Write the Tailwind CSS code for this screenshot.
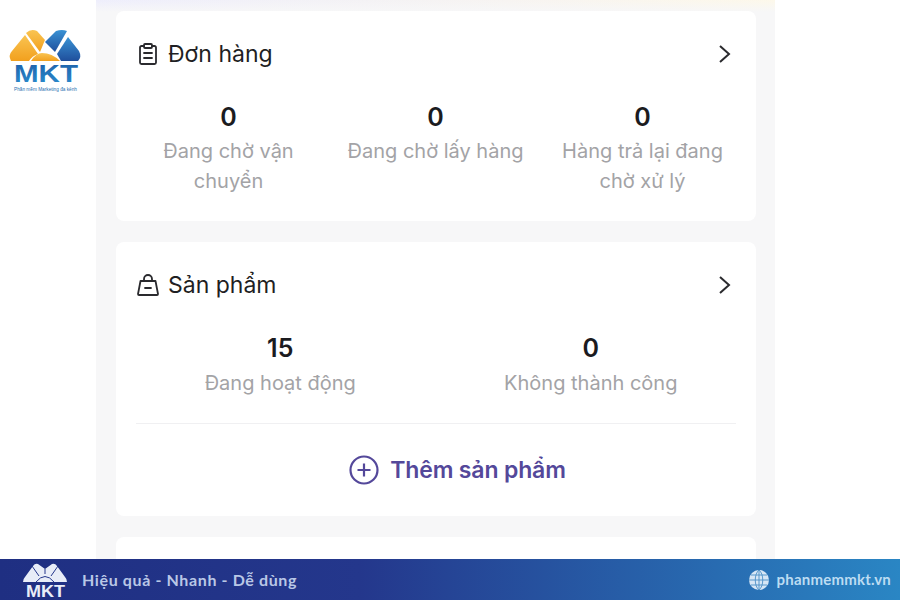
<!DOCTYPE html>
<html lang="en">
<head>
    <meta charset="UTF-8">
    <title>Đơn hàng - Sản phẩm</title>
    <script src="https://cdn.jsdelivr.net/npm/@tailwindcss/browser@4"></script>
</head>
<body class="bg-white font-['Inter',sans-serif] w-[900px] h-[600px] overflow-hidden flex flex-col">

    <!-- Screenshot area -->
    <div class="h-[559px] flex overflow-hidden">
        <!-- Logo column -->
        <div class="w-[96px] shrink-0 pl-[10px] pt-[29px]">
            <svg width="72" height="62" viewBox="0 0 72 62" class="overflow-visible">
                <defs>
                    <linearGradient id="logoOrange" x1="0" y1="0" x2="0" y2="1">
                        <stop offset="0" stop-color="#f9c452"/>
                        <stop offset="1" stop-color="#f2a01e"/>
                    </linearGradient>
                    <linearGradient id="logoBlue" x1="0" y1="0" x2="0" y2="1">
                        <stop offset="0" stop-color="#3a92d4"/>
                        <stop offset="1" stop-color="#1f4f9c"/>
                    </linearGradient>
                    <linearGradient id="logoText" x1="0" y1="0" x2="0" y2="1">
                        <stop offset="0" stop-color="#1f5fa8"/>
                        <stop offset="1" stop-color="#2a8fd0"/>
                    </linearGradient>
                </defs>
                <path d="M1 32 Q-2 26 2 22 L15 6 L28 25 Q22 27 19 32Z" fill="url(#logoOrange)"/>
                <path d="M16 4 Q21 -1 27 2 L35 11 L30 23Z" fill="url(#logoOrange)"/>
                <path d="M21 32 Q26 24 32 24 Q42 24 50 32Z" fill="url(#logoOrange)"/>
                <path d="M35 13 L46 2 Q52 0 57 2 L45 23Z" fill="url(#logoBlue)"/>
                <path d="M47 25 L58 8 L69 22 Q72 28 68 32 L51 32Z" fill="url(#logoBlue)"/>
                <text x="4" y="53" font-family="Liberation Sans" font-weight="700" font-size="23" textLength="64" lengthAdjust="spacingAndGlyphs" fill="url(#logoText)">MKT</text>
                <text x="4" y="61.500" font-family="Liberation Sans" font-size="4.500" textLength="63" lengthAdjust="spacingAndGlyphs" fill="#2a6fb0">Phần mềm Marketing đa kênh</text>
            </svg>
        </div>

        <!-- Phone column -->
        <div class="w-[679px] shrink-0 bg-[linear-gradient(180deg,transparent_0,#f7f7f8_12px),linear-gradient(90deg,#eeeefc,#fdf8ea)] pl-[20px] pr-[19px] pt-[11px] flex flex-col gap-[21px]">
            <!-- Orders card -->
            <section class="h-[210px] shrink-0 bg-white rounded-[8px] px-[20px] pt-[28px]">
                <div class="flex items-center justify-between h-[30px]">
                    <div class="flex items-center gap-[8px]">
                        <svg class="w-[24px] h-[24px] text-[#2a2a2e]" viewBox="0 0 24 24" fill="none" stroke="currentColor" stroke-width="1.8" stroke-linejoin="round" stroke-linecap="round">
                            <path d="M8 4H5.5A1.5 1.5 0 0 0 4 5.500V20.500A1.500 1.500 0 0 0 5.500 22H18.500A1.500 1.500 0 0 0 20 20.500V5.500A1.500 1.500 0 0 0 18.500 4H16"/>
                            <rect x="8" y="2" width="8" height="4" rx="1"/>
                            <path d="M8 11H16M8 16H16"/>
                        </svg>
                        <h2 class="text-[23px] leading-[30px] text-[#1f1f23]">Đơn hàng</h2>
                    </div>
                    <svg class="w-[24px] h-[24px] text-[#2a2a2e]" viewBox="0 0 24 24" fill="none" stroke="currentColor" stroke-width="2"><path d="M7 4L16 12L7 20" transform="translate(1 0)"/></svg>
                </div>
                <div class="grid grid-cols-3 -ml-[11px] -mr-[10px] mt-[33px] text-center">
                    <div class="px-[20px]">
                        <div class="text-[25px] leading-[30px] font-semibold text-[#1b1b1f]">0</div>
                        <div class="text-[20px] leading-[30px] mt-[4px] text-[#a3a3a6]">Đang chờ vận chuyển</div>
                    </div>
                    <div>
                        <div class="text-[25px] leading-[30px] font-semibold text-[#1b1b1f]">0</div>
                        <div class="text-[20px] leading-[30px] mt-[4px] text-[#a3a3a6] whitespace-nowrap">Đang chờ lấy hàng</div>
                    </div>
                    <div class="px-[20px]">
                        <div class="text-[25px] leading-[30px] font-semibold text-[#1b1b1f]">0</div>
                        <div class="text-[20px] leading-[30px] mt-[4px] text-[#a3a3a6]">Hàng trả lại đang chờ xử lý</div>
                    </div>
                </div>
            </section>

            <!-- Products card -->
            <section class="h-[274px] shrink-0 bg-white rounded-[8px] px-[20px] pt-[28px]">
                <div class="flex items-center justify-between h-[30px]">
                    <div class="flex items-center gap-[8px]">
                        <svg class="w-[24px] h-[24px] text-[#2a2a2e]" viewBox="0 0 24 24" fill="none" stroke="currentColor" stroke-width="1.8" stroke-linejoin="round" stroke-linecap="round">
                            <path d="M4.500 8H19.500L22 21A1 1 0 0 1 21 22H3A1 1 0 0 1 2 21Z"/>
                            <path d="M8 8V6A4 4 0 0 1 16 6V8"/>
                            <path d="M9 15H15"/>
                        </svg>
                        <h2 class="text-[23px] leading-[30px] text-[#1f1f23]">Sản phẩm</h2>
                    </div>
                    <svg class="w-[24px] h-[24px] text-[#2a2a2e]" viewBox="0 0 24 24" fill="none" stroke="currentColor" stroke-width="2"><path d="M7 4L16 12L7 20" transform="translate(1 0)"/></svg>
                </div>
                <div class="border-b border-[#f0f0f2] pb-[25px] mt-[33px]">
                    <div class="grid grid-cols-2 -ml-[11px] -mr-[10px] text-center">
                        <div>
                            <div class="text-[25px] leading-[30px] font-semibold text-[#1b1b1f]">15</div>
                            <div class="text-[20px] leading-[30px] mt-[5px] text-[#a3a3a6]">Đang hoạt động</div>
                        </div>
                        <div>
                            <div class="text-[25px] leading-[30px] font-semibold text-[#1b1b1f]">0</div>
                            <div class="text-[20px] leading-[30px] mt-[5px] text-[#a3a3a6]">Không thành công</div>
                        </div>
                    </div>
                </div>
                <div class="flex items-center justify-center gap-[11px] mt-[31px] ml-[43px]">
                    <svg class="w-[30px] h-[30px] text-[#54489a]" viewBox="0 0 30 30" fill="none" stroke="currentColor" stroke-width="2.200">
                        <circle cx="15" cy="15" r="13.500"/>
                        <path d="M15 8.500V21.500M8.500 15H21.500"/>
                    </svg>
                    <span class="text-[23px] leading-[30px] font-semibold tracking-[-0.15px] text-[#54489a]">Thêm sản phẩm</span>
                </div>
            </section>

            <!-- Next card, cut off by the footer -->
            <section class="h-[60px] shrink-0 bg-white rounded-[8px]"></section>
        </div>
    </div>

    <!-- Footer banner -->
    <footer class="h-[41px] shrink-0 bg-[linear-gradient(90deg,#1f2f82_0%,#24378c_40%,#2a86c4_100%)] flex items-center justify-between pl-[23px] pr-[9px]">
        <div class="flex items-center gap-[15px]">
            <svg width="44" height="38" viewBox="0 0 44 38">
                <path d="M0 21 Q0 18 2 16 L10 5 Q12 2 15 3 L22 8 L29 3 Q32 2 34 5 L42 16 Q44 18 44 21Z" fill="#e8edf8"/>
                <path d="M13 21 Q22 10 31 21M9 5 L16 15M35 5 L28 15M22 8 V13" fill="none" stroke="#24378c" stroke-width="1"/>
                <text x="3" y="36" font-family="Liberation Sans" font-weight="700" font-size="16" textLength="39" lengthAdjust="spacingAndGlyphs" fill="#e8edf8">MKT</text>
            </svg>
            <span class="text-[16px] font-bold tracking-[0.62px] text-[#b9c7e6] font-['Lato',sans-serif]">Hiệu quả - Nhanh - Dễ dùng</span>
        </div>
        <div class="flex items-center gap-[8px]">
            <svg class="w-[20px] h-[20px]" viewBox="0 0 20 20" fill="none">
                <circle cx="10" cy="10" r="10" fill="#d6e6f5"/>
                <path d="M10 0V20M0 10H20M2 5H18M2 15H18M10 0C5 4 5 16 10 20M10 0C15 4 15 16 10 20" stroke="#4b8fc6" stroke-width="0.900"/>
            </svg>
            <span class="text-[15px] font-bold tracking-[0.2px] text-[#bcdcf2] font-['Lato',sans-serif]">phanmemmkt.vn</span>
        </div>
    </footer>
</body>
</html>
